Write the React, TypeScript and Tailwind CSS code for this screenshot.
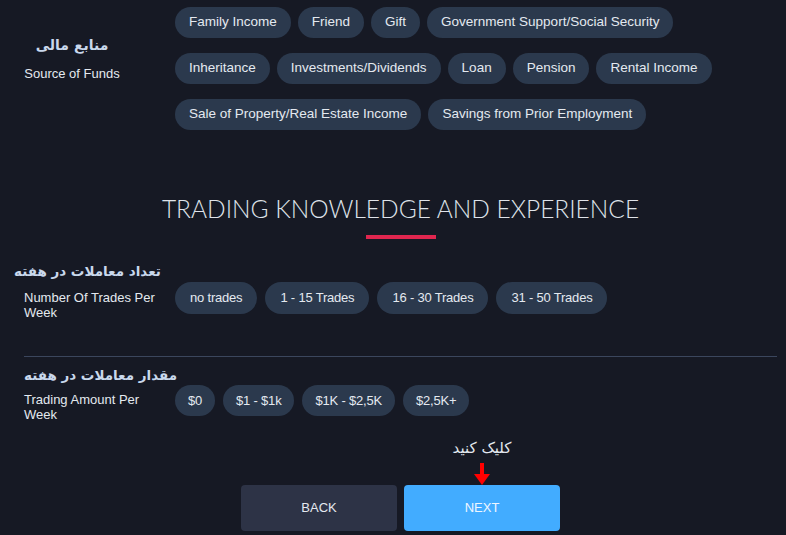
import React from "react";

const sourceOfFunds = [
  "Family Income",
  "Friend",
  "Gift",
  "Government Support/Social Security",
  "Inheritance",
  "Investments/Dividends",
  "Loan",
  "Pension",
  "Rental Income",
  "Sale of Property/Real Estate Income",
  "Savings from Prior Employment",
];

const tradesPerWeek = ["no trades", "1 - 15 Trades", "16 - 30 Trades", "31 - 50 Trades"];
const amountPerWeek = ["$0", "$1 - $1k", "$1K - $2,5K", "$2,5K+"];

const arabic = { fontFamily: '"DejaVu Sans", sans-serif' };

const Pill = ({ label }: { label: string }) => (
  <button className="h-[31px] px-[14px] rounded-full bg-[#2b394d] text-[13.5px] text-[#e4e9f0] whitespace-nowrap">
    {label}
  </button>
);

const App: React.FC = () => {
  return (
    <div
      className="w-[786px] h-[535px] overflow-hidden bg-[#161924] pl-[24px] pr-[9px] pt-[7px]"
      style={{ fontFamily: '"Liberation Sans", Arial, sans-serif' }}
    >
      {/* Source of funds */}
      <div className="flex">
        <div className="w-[151px] shrink-0 flex flex-col items-start pt-[27px]">
          <div className="w-[96px] flex flex-col items-center">
            <span
              dir="rtl"
              className="text-[14px] font-bold text-[#c9d8ec] leading-[22px] whitespace-nowrap"
              style={arabic}
            >
              منابع مالی
            </span>
            <span className="mt-[8px] text-[13px] text-[#e4e9f0]">Source of Funds</span>
          </div>
        </div>
        <div className="flex flex-wrap gap-x-[7px] gap-y-[15px] w-[560px]">
          {sourceOfFunds.map((s) => (
            <Pill key={s} label={s} />
          ))}
        </div>
      </div>

      {/* Heading */}
      <div className="flex flex-col items-center mt-[64px]">
        <h2
          className="text-[24.5px] font-light text-[#dfe3ea] leading-[30px]"
          style={{ fontFamily: 'Lato, "Liberation Sans", sans-serif' }}
        >
          TRADING KNOWLEDGE AND EXPERIENCE
        </h2>
        <div className="mt-[11px] w-[70px] h-[4px] bg-[#e0264f]" />
      </div>

      {/* Number of trades */}
      <div className="mt-[21px] -ml-[10px] flex">
        <span
          dir="rtl"
          className="text-[13.5px] font-bold text-[#c9d8ec] leading-[22px] whitespace-nowrap"
          style={arabic}
        >
          تعداد معاملات در هفته
        </span>
      </div>
      <div className="flex items-start">
        <div className="w-[151px] shrink-0 pt-[8px] text-[13px] leading-[15px] text-[#e4e9f0] pr-[10px]">
          Number Of Trades Per Week
        </div>
        <div className="flex gap-[8px]">
          {tradesPerWeek.map((t) => (
            <button
              key={t}
              className="h-[32px] px-[15px] rounded-full bg-[#2b394d] text-[13px] tracking-[-0.2px] text-[#e4e9f0] whitespace-nowrap"
            >
              {t}
            </button>
          ))}
        </div>
      </div>

      <div className="mt-[36px] h-[1px] bg-[#3b465d]" />

      {/* Trading amount */}
      <div className="mt-[7px] flex">
        <span
          dir="rtl"
          className="text-[13.5px] font-bold text-[#c9d8ec] leading-[22px] whitespace-nowrap"
          style={arabic}
        >
          مقدار معاملات در هفته
        </span>
      </div>
      <div className="flex items-start -mt-[1px]">
        <div className="w-[151px] shrink-0 pt-[7px] text-[13px] leading-[15px] text-[#e4e9f0] pr-[10px]">
          Trading Amount Per Week
        </div>
        <div className="flex gap-[8px]">
          {amountPerWeek.map((a) => (
            <button
              key={a}
              className="h-[31px] px-[13px] rounded-full bg-[#2b394d] text-[13px] tracking-[-0.2px] text-[#e4e9f0] whitespace-nowrap"
            >
              {a}
            </button>
          ))}
        </div>
      </div>

      {/* Buttons */}
      <div className="mt-[16px] flex justify-center gap-[7px]">
        <div className="w-[156px] flex flex-col justify-end">
          <button className="h-[46px] w-full rounded-[4px] bg-[#2d3346] text-[13px] text-[#e4e9f0]">
            BACK
          </button>
        </div>
        <div className="w-[156px] flex flex-col items-center">
          <span
            dir="rtl"
            className="text-[15px] text-[#e4e9f0] leading-[20px] whitespace-nowrap"
            style={arabic}
          >
            کلیک کنید
          </span>
          <svg width="16" height="22" viewBox="0 0 16 22" className="mt-[5px]">
            <rect x="6" y="0" width="4" height="12" fill="#f00" />
            <polygon points="0,11 16,11 8,22" fill="#f00" />
          </svg>
          <button className="h-[46px] w-full rounded-[4px] bg-[#42acff] text-[13px] text-[#eef6ff]">
            NEXT
          </button>
        </div>
      </div>
    </div>
  );
};

export default App;
